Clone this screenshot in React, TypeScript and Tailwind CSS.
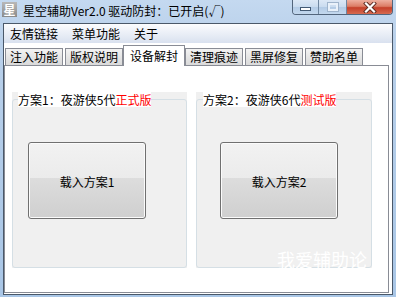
import React from "react";

const TABS = ["注入功能", "版权说明", "设备解封", "清理痕迹", "黑屏修复", "赞助名单"];
const ACTIVE = 2;

function CaptionButtons() {
  return (
    <div className="ml-auto mr-[3px] flex h-[15px] border border-t-0 border-[#52657c] rounded-b-[4px] overflow-hidden">
      <div className="w-[26px] h-full flex items-end justify-center pb-[3px] border-r border-[#6f86a0] bg-[linear-gradient(to_bottom,#dce8f6_0%,#c9dbef_50%,#b3cbe6_50%,#c3d8ee_100%)]">
        <div className="w-[11px] h-[4px] bg-white border border-[#435a74]" />
      </div>
      <div className="w-[28px] h-full flex items-center justify-center border-r border-[#6f86a0] bg-[linear-gradient(to_bottom,#dce8f6_0%,#c9dbef_50%,#b3cbe6_50%,#c3d8ee_100%)]">
        <div className="w-[10px] h-[8px] border-[2px] border-[#e9f1fa] outline outline-1 outline-[#9fb4cc]" />
      </div>
      <div className="w-[45px] h-full flex items-center justify-center bg-[linear-gradient(to_bottom,#eeb0a0_0%,#dc7d66_45%,#c5402a_55%,#d66a50_100%)]">
        <svg width="14" height="11" viewBox="0 0 14 11">
          <path d="M3 1.5 L11 9.5 M11 1.5 L3 9.5" stroke="#5b2a22" strokeWidth="4" strokeLinecap="square" />
          <path d="M3 1.5 L11 9.5 M11 1.5 L3 9.5" stroke="#ffffff" strokeWidth="2.2" strokeLinecap="square" />
        </svg>
      </div>
    </div>
  );
}

function GroupBox({ width, labelLeft, num, gen, tag, btnLeft, watermark }: {
  width: number; labelLeft: string; num: string; gen: string; tag: string; btnLeft: string; watermark?: boolean;
}) {
  return (
    <div className="relative h-[176px] bg-[#f0f0f0]" style={{ width }}>
      <div className="absolute left-0 right-0 top-[7px] bottom-0 border border-[#d5dfe5] rounded-[3px]" />
      <div className={`absolute top-0 ${labelLeft} h-[15px] leading-[15px] bg-white whitespace-nowrap`}>
        方案{num}：夜游侠{gen}代<span className="text-[#ff0000]">{tag}</span>
      </div>
      <div className={`relative ${btnLeft} mt-[50px] w-[118px] h-[77px] border border-[#707070] rounded-[3px] shadow-[inset_0_0_0_1px_#fbfbfb] bg-[linear-gradient(to_bottom,#f2f2f2_0%,#ebebeb_46%,#dddddd_46%,#cfcfcf_100%)] flex items-center justify-center pt-[3px]`}>
        载入方案{num}
      </div>
      {watermark && (
        <div className="absolute left-[81px] top-[158px] text-[18px] leading-none text-white whitespace-nowrap">我爱辅助论</div>
      )}
    </div>
  );
}

export default function App() {
  return (
    <div className="w-[396px] h-[297px] overflow-hidden flex flex-col bg-[linear-gradient(to_bottom,#c4d9f0_0px,#b9d0ea_40px,#a9c6e6_297px)] text-[12px] text-black font-['Noto_Sans_CJK_SC','Noto_Sans',sans-serif]">
      <div className="h-[23px] flex items-start">
        <div className="ml-[2px] mt-[2px] w-[15px] h-[15px] bg-[linear-gradient(to_bottom,#b8b8b8,#8a8a8a)] flex items-center justify-center text-[12px] leading-none font-bold text-white">
          星
        </div>
        <div className="ml-[6px] mt-[3px] leading-[15px] whitespace-nowrap">星空辅助Ver2.0 驱动防封：已开启(√)</div>
        <CaptionButtons />
      </div>

      <div className="mx-[3px] mb-[2px] flex-1 border border-[#4a5869] bg-white flex flex-col">
        <div className="h-[19px] flex items-center gap-[14px] pl-[6px] bg-[linear-gradient(to_bottom,#fbfcfe,#d9e1ef)]">
          <span>友情链接</span>
          <span>菜单功能</span>
          <span>关于</span>
        </div>

        <div className="h-[22px] flex items-end gap-[2px] pl-[1px] bg-white">
          {TABS.map((t, i) =>
            i === ACTIVE ? (
              <div key={t} className="relative z-10 -mx-[2px] -mb-[1px] w-[62px] h-[21px] border border-b-0 border-[#898c95] bg-white flex items-center justify-center">
                {t}
              </div>
            ) : (
              <div key={t} className="w-[58px] h-[17px] border border-b-0 border-[#898c95] bg-[linear-gradient(to_bottom,#f3f3f3,#e6e6e6_50%,#dadada)] flex items-center justify-center">
                {t}
              </div>
            )
          )}
        </div>

        <div className="flex-1 mr-[3px] mb-[1px] border border-[#898c95] bg-white flex items-start gap-[9px] pl-[7px] pt-[26px]">
          <GroupBox width={175} labelLeft="left-[6px]" num="1" gen="5" tag="正式版" btnLeft="ml-[16px]" />
          <GroupBox width={176} labelLeft="left-[7px]" num="2" gen="6" tag="测试版" btnLeft="ml-[24px]" watermark />
        </div>
      </div>
    </div>
  );
}
